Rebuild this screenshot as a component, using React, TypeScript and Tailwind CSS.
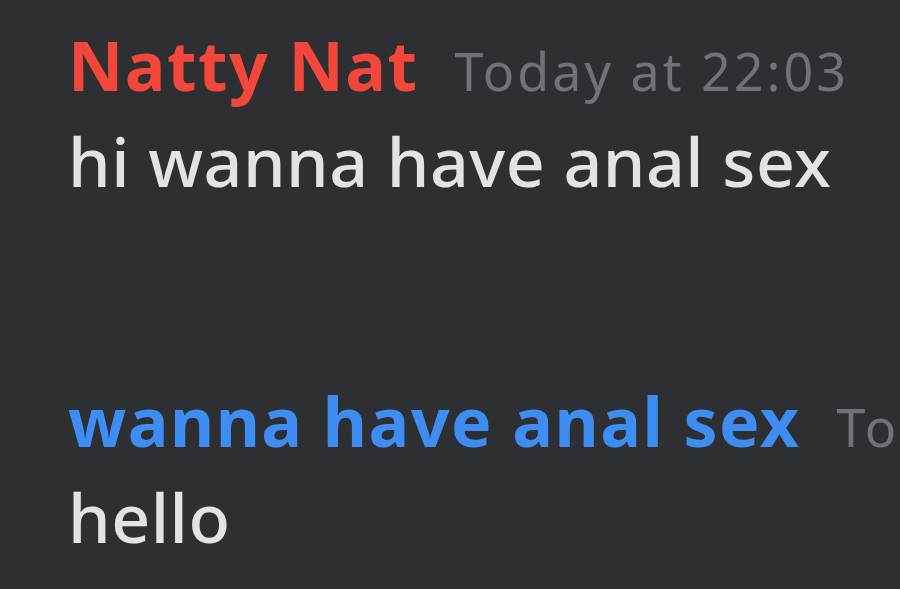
const messages = [
  {
    name: "Natty Nat",
    nameColor: "text-[#f2473a]",
    time: "Today at 22:03",
    text: "hi wanna have anal sex",
  },
  {
    name: "wanna have anal sex",
    nameColor: "text-[#3d8df2]",
    time: "Today at 22:03",
    text: "hello",
  },
];

export default function App() {
  return (
    <div
      className="w-[900px] h-[589px] overflow-hidden bg-[#2d2f33] pl-[68px] pt-[17px] flex flex-col gap-[164px]"
      style={{ fontFamily: '"Noto Sans", "Open Sans", sans-serif' }}
    >
      {messages.map((m, i) => (
        <div key={i} className="flex flex-col whitespace-nowrap">
          <div className="flex items-baseline gap-[36px] h-[96px] leading-[96px]">
            <span className={`text-[68px] font-bold tracking-[1.5px] ${m.nameColor}`}>
              {m.name}
            </span>
            <span className="text-[52px] text-[#6f7277] tracking-[3px]">
              {m.time}
            </span>
          </div>
          <div className="text-[68px] font-medium text-[#e2e3e5] tracking-[0.5px] h-[96px] leading-[96px]">
            {m.text}
          </div>
        </div>
      ))}
    </div>
  );
}
